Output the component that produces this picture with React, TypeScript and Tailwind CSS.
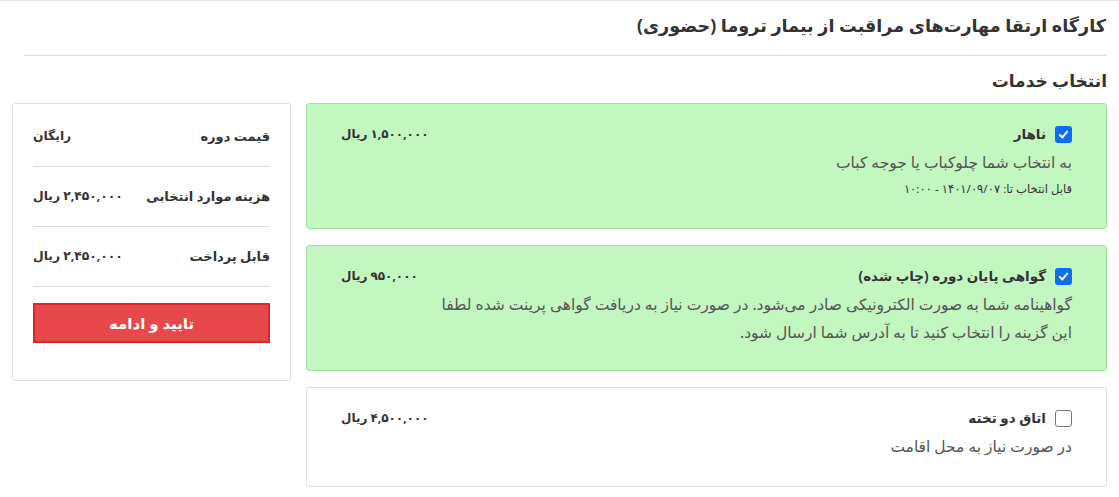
import React from 'react';

type Service = {
  id: string;
  title: string;
  price: string;
  lines: string[];
  note?: string;
  checked: boolean;
};

const services: Service[] = [
  {
    id: 'lunch',
    title: 'ناهار',
    price: '۱,۵۰۰,۰۰۰ ریال',
    lines: ['به انتخاب شما چلوکباب یا جوجه کباب'],
    note: 'قابل انتخاب تا: ۱۴۰۱/۰۹/۰۷ - ۱۰:۰۰',
    checked: true,
  },
  {
    id: 'cert',
    title: 'گواهی پایان دوره (چاپ شده)',
    price: '۹۵۰,۰۰۰ ریال',
    lines: [
      'گواهینامه شما به صورت الکترونیکی صادر می‌شود. در صورت نیاز به دریافت گواهی پرینت شده لطفا',
      'این گزینه را انتخاب کنید تا به آدرس شما ارسال شود.',
    ],
    checked: true,
  },
  {
    id: 'room',
    title: 'اتاق دو تخته',
    price: '۴,۵۰۰,۰۰۰ ریال',
    lines: ['در صورت نیاز به محل اقامت'],
    checked: false,
  },
];

const summary = [
  { label: 'قیمت دوره', value: 'رایگان' },
  { label: 'هزینه موارد انتخابی', value: '۲,۴۵۰,۰۰۰ ریال' },
  { label: 'قابل پرداخت', value: '۲,۴۵۰,۰۰۰ ریال' },
];

function Checkbox({ checked }: { checked: boolean }) {
  if (checked) {
    return (
      <span className="flex h-[17px] w-[17px] shrink-0 items-center justify-center rounded-[3px] bg-[#0b6cf5]">
        <svg width="11" height="11" viewBox="0 0 12 12" fill="none">
          <path d="M2 6.5 L4.8 9.2 L10 2.8" stroke="white" strokeWidth="2.2" strokeLinecap="round" strokeLinejoin="round" />
        </svg>
      </span>
    );
  }
  return <span className="h-[17px] w-[17px] shrink-0 rounded-[3px] border-[1.5px] border-[#767676] bg-white" />;
}

function ServiceCard({ s }: { s: Service }) {
  return (
    <div
      className={
        s.checked
          ? 'rounded-[3px] border border-[#a8dea6] bg-[#c3f7c0] px-[34px] pt-[20px] pb-[24px]'
          : 'rounded-[3px] border border-[#dedede] bg-white px-[34px] pt-[20px] pb-[26px]'
      }
    >
      <div className="flex h-[20px] items-center justify-between">
        <div className="flex items-center gap-[9px]">
          <Checkbox checked={s.checked} />
          <span className="text-[13.5px] leading-[20px] font-bold text-[#333]">{s.title}</span>
        </div>
        <span className="text-[12px] leading-[20px] font-bold text-[#333]">{s.price}</span>
      </div>
      <div className="mt-[4px] text-[15.5px] leading-[28px] text-[#555]">
        {s.lines.map((l) => (
          <div key={l}>{l}</div>
        ))}
      </div>
      {s.note && <div className="mt-[1px] mb-[3px] text-[11.6px] leading-[24px] text-[#333]">{s.note}</div>}
    </div>
  );
}

export default function App() {
  return (
    <div
      dir="rtl"
      className="min-h-[497px] w-full border-t border-[#e5e5e5] bg-white text-[#333]"
      style={{ fontFamily: '"Noto Sans", "DejaVu Sans", sans-serif' }}
    >
      <div className="pr-[12px] pl-[12px]">
        <div className="ml-[12px] flex h-[55px] items-center border-b border-[#dcdcdc] pr-px pb-[6px]">
          <h1 className="text-[17.6px] font-bold text-[#333]">کارگاه ارتقا مهارت‌های مراقبت از بیمار تروما (حضوری)</h1>
        </div>
        <h2 className="mt-[13px] mb-[10px] text-[17px] leading-[24px] font-bold text-[#333]">انتخاب خدمات</h2>
        <div className="flex items-start gap-[15px]">
          <div className="flex flex-1 flex-col gap-[16px]">
            {services.map((s) => (
              <ServiceCard key={s.id} s={s} />
            ))}
          </div>
          <div className="w-[279px] shrink-0 rounded-[3px] border border-[#dedede] bg-white px-[20px] pt-[3px] pb-[37px]">
            {summary.map((r) => (
              <div key={r.label} className="flex h-[60px] items-center justify-between border-b border-[#dcdcdc] text-[13px] font-bold text-[#333]">
                <span>{r.label}</span>
                <span className="text-[12.3px]">{r.value}</span>
              </div>
            ))}
            <button className="mt-[16px] flex h-[40px] w-full items-center justify-center border-2 border-[#d9272b] bg-[#e8474b] text-[15px] font-bold text-white">
              تایید و ادامه
            </button>
          </div>
        </div>
      </div>
    </div>
  );
}
